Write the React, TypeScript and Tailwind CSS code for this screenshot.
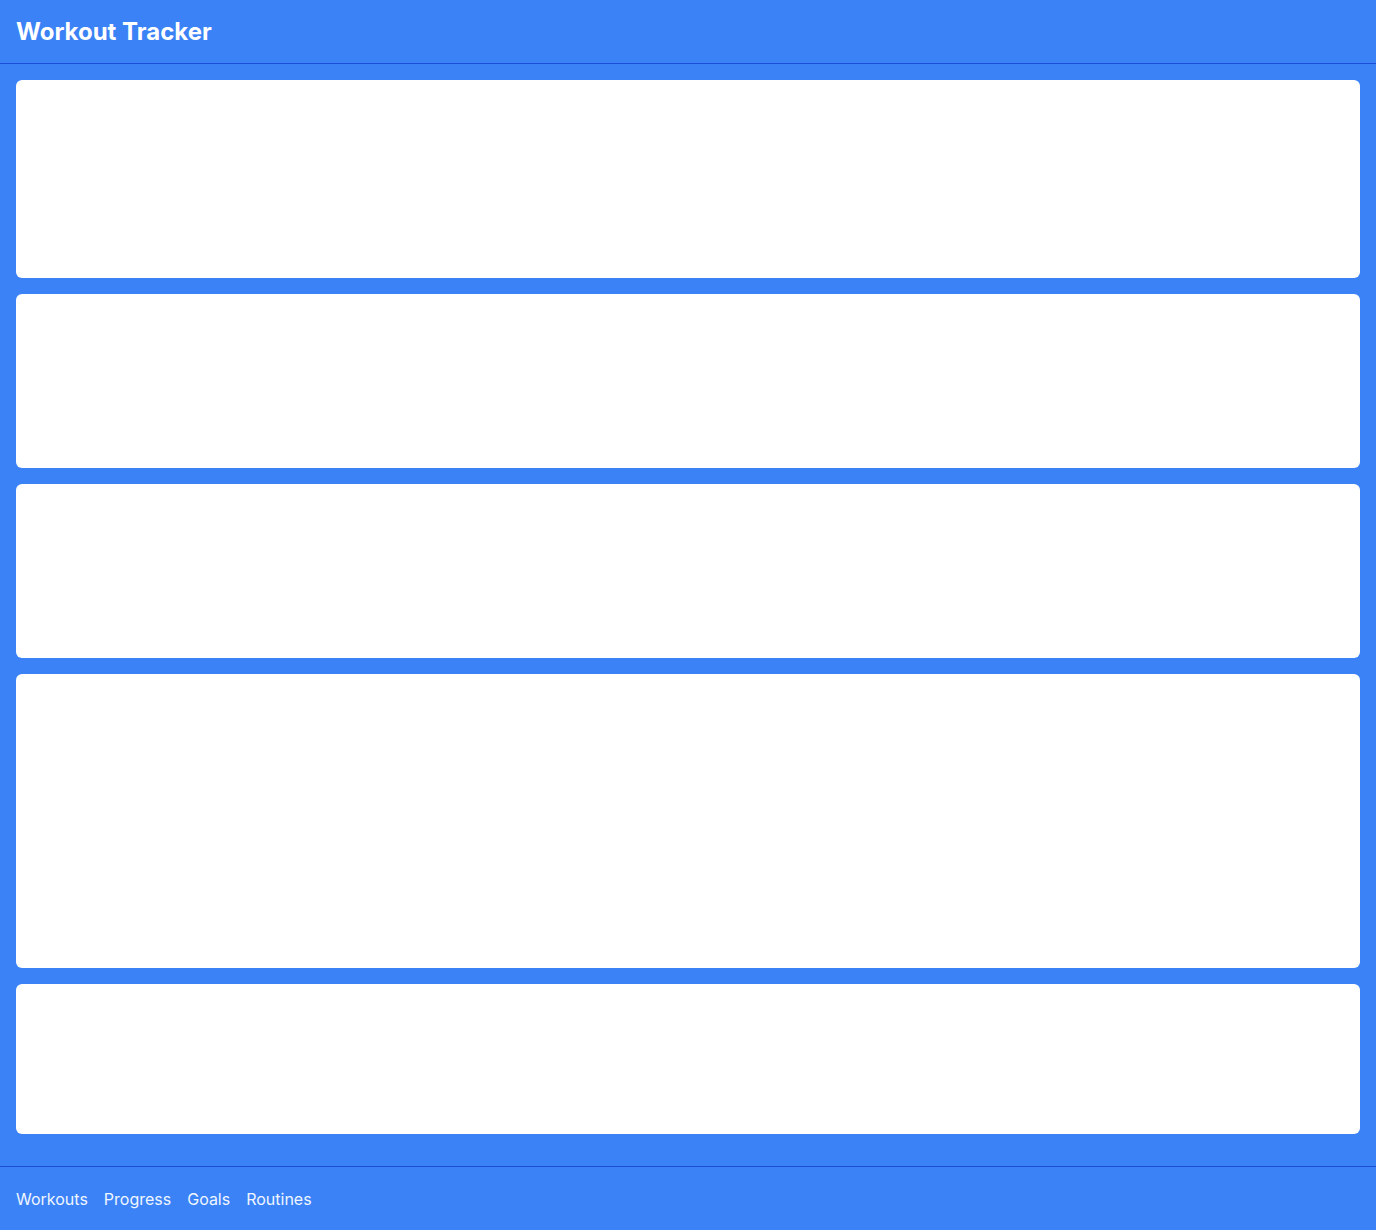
import React from "react";

const cardHeights = ["h-[198px]", "h-[174px]", "h-[174px]", "h-[294px]", "h-[150px]"];

export default function App() {
  return (
    <div className="min-h-screen flex flex-col bg-[#3b82f6] font-['Inter',sans-serif]">
      {/* Header */}
      <header className="h-16 flex items-center px-4 border-b border-[#1d4ed8]">
        <h1 className="text-2xl font-bold text-white">Workout Tracker</h1>
      </header>

      {/* Main content cards */}
      <main className="flex-1 flex flex-col gap-4 p-4">
        {cardHeights.map((h, i) => (
          <section key={i} className={`${h} bg-white rounded-md`} />
        ))}
      </main>

      {/* Footer nav */}
      <footer className="h-16 flex items-center gap-4 px-4 border-t border-[#1d4ed8]">
        <a className="text-base text-[#eff6ff]">Workouts</a>
        <a className="text-base text-[#eff6ff]">Progress</a>
        <a className="text-base text-[#eff6ff]">Goals</a>
        <a className="text-base text-[#eff6ff]">Routines</a>
      </footer>
    </div>
  );
}
